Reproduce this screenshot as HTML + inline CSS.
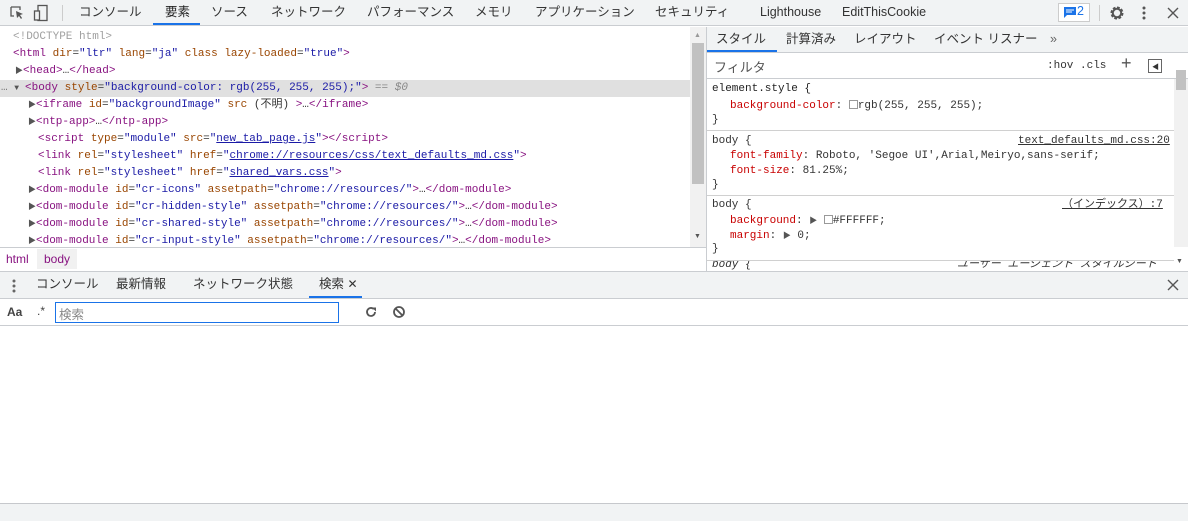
<!DOCTYPE html>
<html><head><meta charset="utf-8"><style>
*{margin:0;padding:0;box-sizing:border-box}
body{width:1188px;height:521px;overflow:hidden;background:#fff;font-family:"Liberation Sans","Noto Sans CJK JP",sans-serif;font-size:12px;color:#333;position:relative}
.a{position:absolute}
.tb{left:0;top:0;width:1188px;height:26px;background:#f1f3f4;border-bottom:1px solid #cacdd1}
.tab{position:absolute;top:0;height:26px;line-height:25px;font-size:12.5px;color:#333;white-space:nowrap}
.code{font-family:"Liberation Mono","Noto Sans CJK JP",monospace;font-size:11px;white-space:pre;line-height:17px}
.tg{color:#881280}.an{color:#994500}.av{color:#1a1aa6}.br{color:#a0a0a0}.lk{color:#1a1aa6;text-decoration:underline}
.ln{position:absolute;height:17px}
.tri{color:#555;font-size:8px}
.pr{color:#c80000}
.rule{position:absolute;left:707px;width:467px;border-bottom:1px solid #d0d0d0}
</style></head><body>
<div class="a tb"></div>
<svg class="a" style="left:9px;top:5px" width="16" height="16" viewBox="0 0 16 16"><path d="M2 2h9v3M2 2v9h3" fill="none" stroke="#555" stroke-width="1.3"/><path d="M7 6l7 3-3 1 2 3-1 1-2-3-2 2z" fill="#555"/></svg>
<svg class="a" style="left:33px;top:4px" width="16" height="18" viewBox="0 0 16 18"><rect x="5" y="1.5" width="9" height="15" fill="none" stroke="#555" stroke-width="1.3"/><rect x="1.5" y="7" width="5" height="9" fill="#f1f3f4" stroke="#555" stroke-width="1.3"/></svg>
<div class="a" style="left:62px;top:5px;width:1px;height:16px;background:#ccc"></div>
<div class="tab" style="left:79px">コンソール</div>
<div class="tab" style="left:165px;color:#222">要素</div>
<div class="a" style="left:153px;top:23px;width:47px;height:2px;background:#1a73e8"></div>
<div class="tab" style="left:211px">ソース</div>
<div class="tab" style="left:271px">ネットワーク</div>
<div class="tab" style="left:367px">パフォーマンス</div>
<div class="tab" style="left:475px">メモリ</div>
<div class="tab" style="left:535px">アプリケーション</div>
<div class="tab" style="left:655px">セキュリティ</div>
<div class="tab" style="left:760px">Lighthouse</div>
<div class="tab" style="left:842px">EditThisCookie</div>
<div class="a" style="left:1058px;top:3px;width:32px;height:19px;border:1px solid #ccc;background:#fff"></div>
<svg class="a" style="left:1064px;top:7px" width="12" height="11" viewBox="0 0 12 11"><path d="M0 0h12v8H3l-3 3z" fill="#1a73e8"/><path d="M2 3h8M2 5h6" stroke="#fff"/></svg>
<div class="a" style="left:1077px;top:4px;font-size:12.5px;color:#1a73e8">2</div>
<div class="a" style="left:1099px;top:5px;width:1px;height:16px;background:#ccc"></div>
<svg class="a" style="left:1109px;top:5px" width="16" height="16" viewBox="0 0 16 16"><circle cx="8" cy="8" r="5" fill="none" stroke="#555" stroke-width="3" stroke-dasharray="2.5 1.4"/><circle cx="8" cy="8" r="4.2" fill="none" stroke="#555" stroke-width="2"/></svg>
<svg class="a" style="left:1142px;top:5px" width="4" height="16"><circle cx="2" cy="3" r="1.5" fill="#555"/><circle cx="2" cy="8" r="1.5" fill="#555"/><circle cx="2" cy="13" r="1.5" fill="#555"/></svg>
<svg class="a" style="left:1167px;top:7px" width="12" height="12"><path d="M1 1l10 10M11 1L1 11" stroke="#555" stroke-width="1.4"/></svg>

<div class="a" style="left:0;top:80px;width:690px;height:17px;background:#e0e0e0"></div>
<div class="a code" style="left:0;top:29px;width:690px">
<div class="ln" style="top:0;left:13px;color:#a0a0a0">&lt;!DOCTYPE html&gt;</div>
<div class="ln" style="top:17px;left:13px"><span class="tg">&lt;html</span> <span class="an">dir</span>=<span class="av">"ltr"</span> <span class="an">lang</span>=<span class="av">"ja"</span> <span class="an">class</span> <span class="an">lazy-loaded</span>=<span class="av">"true"</span><span class="tg">&gt;</span></div>
<div class="ln" style="top:34px;left:15px"><span class="tri">▶</span><span class="tg">&lt;head&gt;</span>…<span class="tg">&lt;/head&gt;</span></div>
<div class="ln" style="top:51px;left:1px;color:#777">… <span class="tri">▼</span></div>
<div class="ln" style="top:51px;left:25px"><span class="tg">&lt;body</span> <span class="an">style</span>=<span class="av">"background-color: rgb(255, 255, 255);"</span><span class="tg">&gt;</span> <span style="color:#888;font-style:italic">== $0</span></div>
<div class="ln" style="top:68px;left:28px"><span class="tri">▶</span><span class="tg">&lt;iframe</span> <span class="an">id</span>=<span class="av">"backgroundImage"</span> <span class="an">src</span> (不明) <span class="tg">&gt;</span>…<span class="tg">&lt;/iframe&gt;</span></div>
<div class="ln" style="top:85px;left:28px"><span class="tri">▶</span><span class="tg">&lt;ntp-app&gt;</span>…<span class="tg">&lt;/ntp-app&gt;</span></div>
<div class="ln" style="top:102px;left:38px"><span class="tg">&lt;script</span> <span class="an">type</span>=<span class="av">"module"</span> <span class="an">src</span>=<span class="av">"<span class="lk">new_tab_page.js</span>"</span><span class="tg">&gt;&lt;/script&gt;</span></div>
<div class="ln" style="top:119px;left:38px"><span class="tg">&lt;link</span> <span class="an">rel</span>=<span class="av">"stylesheet"</span> <span class="an">href</span>=<span class="av">"<span class="lk">chrome://resources/css/text_defaults_md.css</span>"</span><span class="tg">&gt;</span></div>
<div class="ln" style="top:136px;left:38px"><span class="tg">&lt;link</span> <span class="an">rel</span>=<span class="av">"stylesheet"</span> <span class="an">href</span>=<span class="av">"<span class="lk">shared_vars.css</span>"</span><span class="tg">&gt;</span></div>
<div class="ln" style="top:153px;left:28px"><span class="tri">▶</span><span class="tg">&lt;dom-module</span> <span class="an">id</span>=<span class="av">"cr-icons"</span> <span class="an">assetpath</span>=<span class="av">"chrome://resources/"</span><span class="tg">&gt;</span>…<span class="tg">&lt;/dom-module&gt;</span></div>
<div class="ln" style="top:170px;left:28px"><span class="tri">▶</span><span class="tg">&lt;dom-module</span> <span class="an">id</span>=<span class="av">"cr-hidden-style"</span> <span class="an">assetpath</span>=<span class="av">"chrome://resources/"</span><span class="tg">&gt;</span>…<span class="tg">&lt;/dom-module&gt;</span></div>
<div class="ln" style="top:187px;left:28px"><span class="tri">▶</span><span class="tg">&lt;dom-module</span> <span class="an">id</span>=<span class="av">"cr-shared-style"</span> <span class="an">assetpath</span>=<span class="av">"chrome://resources/"</span><span class="tg">&gt;</span>…<span class="tg">&lt;/dom-module&gt;</span></div>
<div class="ln" style="top:204px;left:28px"><span class="tri">▶</span><span class="tg">&lt;dom-module</span> <span class="an">id</span>=<span class="av">"cr-input-style"</span> <span class="an">assetpath</span>=<span class="av">"chrome://resources/"</span><span class="tg">&gt;</span>…<span class="tg">&lt;/dom-module&gt;</span></div>
</div>
<div class="a" style="left:690px;top:27px;width:16px;height:220px;background:#f1f1f1"></div>
<div class="a" style="left:692px;top:43px;width:12px;height:141px;background:#c1c1c1"></div>
<div class="a" style="left:694px;top:32px;font-size:7px;color:#999">▲</div>
<div class="a" style="left:694px;top:233px;font-size:7px;color:#555">▼</div>
<div class="a" style="left:706px;top:27px;width:1px;height:244px;background:#cacdd1"></div>
<div class="a" style="left:0;top:247px;width:706px;height:24px;border-top:1px solid #cacdd1;background:#fff"></div>
<div class="a" style="left:37px;top:249px;width:40px;height:20px;background:#f1f1f1"></div>
<div class="a" style="left:6px;top:252px;color:#881280;font-size:12px">html</div>
<div class="a" style="left:44px;top:252px;color:#881280;font-size:12px">body</div>

<div class="a" style="left:707px;top:27px;width:481px;height:26px;background:#f1f3f4;border-bottom:1px solid #cacdd1"></div>
<div class="tab" style="left:716px;top:27px">スタイル</div>
<div class="a" style="left:707px;top:50px;width:70px;height:2px;background:#1a73e8"></div>
<div class="tab" style="left:786px;top:27px">計算済み</div>
<div class="tab" style="left:854px;top:27px">レイアウト</div>
<div class="tab" style="left:934px;top:27px">イベント リスナー</div>
<div class="tab" style="left:1050px;top:27px;color:#666">»</div>
<div class="a" style="left:707px;top:54px;width:481px;height:25px;border-bottom:1px solid #cacdd1;background:#fff"></div>
<div class="a" style="left:714px;top:57px;font-size:13px;color:#555">フィルタ</div>
<div class="a code" style="left:1047px;top:58px;color:#333">:hov .cls</div>
<div class="a" style="left:1121px;top:53px;font-size:18px;color:#555">+</div>
<div class="a" style="left:1148px;top:59px;width:14px;height:14px;border:1px solid #666"></div>
<div class="a" style="left:1152px;top:62px;font-size:7px;color:#333">◀</div>
<div class="a" style="left:1174px;top:79px;width:14px;height:168px;background:#f1f1f1"></div>
<div class="a" style="left:1176px;top:70px;width:10px;height:20px;background:#c1c1c1"></div>

<div class="a code" style="left:712px;top:81px;color:#222">element.style {</div>
<div class="a code" style="left:730px;top:98px"><span class="pr">background-color</span>: <span style="display:inline-block;width:9px;height:9px;border:1px solid #999;vertical-align:-1px"></span>rgb(255, 255, 255);</div>
<div class="a code" style="left:712px;top:112px">}</div>
<div class="rule" style="top:130px"></div>
<div class="a code" style="left:712px;top:133px">body {</div>
<div class="a code" style="left:1018px;top:133px;text-decoration:underline">text_defaults_md.css:20</div>
<div class="a code" style="left:730px;top:148px"><span class="pr">font-family</span>: Roboto, 'Segoe UI',Arial,Meiryo,sans-serif;</div>
<div class="a code" style="left:730px;top:163px"><span class="pr">font-size</span>: 81.25%;</div>
<div class="a code" style="left:712px;top:177px">}</div>
<div class="rule" style="top:195px"></div>
<div class="a code" style="left:712px;top:197px">body {</div>
<div class="a code" style="left:1062px;top:197px;text-decoration:underline">（インデックス）:7</div>
<div class="a code" style="left:730px;top:213px"><span class="pr">background</span>: <span class="tri">▶</span> <span style="display:inline-block;width:9px;height:9px;border:1px solid #999;vertical-align:-1px"></span>#FFFFFF;</div>
<div class="a code" style="left:730px;top:228px"><span class="pr">margin</span>: <span class="tri">▶</span> 0;</div>
<div class="a code" style="left:712px;top:241px">}</div>
<div class="rule" style="top:260px"></div>
<div class="a" style="left:707px;top:261px;width:467px;height:10px;overflow:hidden"><div class="code" style="position:absolute;left:5px;top:-4px;font-style:italic">body {</div><div class="code" style="position:absolute;left:250px;top:-4px;font-style:italic">ユーザー エージェント スタイルシート</div></div>
<div class="a" style="left:1176px;top:258px;font-size:7px;color:#555">▼</div>

<div class="a" style="left:0;top:271px;width:1188px;height:28px;background:#f1f3f4;border-top:1px solid #cacdd1;border-bottom:1px solid #cacdd1"></div>
<svg class="a" style="left:12px;top:279px" width="4" height="14"><circle cx="2" cy="2" r="1.5" fill="#666"/><circle cx="2" cy="7" r="1.5" fill="#666"/><circle cx="2" cy="12" r="1.5" fill="#666"/></svg>
<div class="tab" style="left:36px;top:272px">コンソール</div>
<div class="tab" style="left:116px;top:272px">最新情報</div>
<div class="tab" style="left:193px;top:272px">ネットワーク状態</div>
<div class="tab" style="left:319px;top:272px">検索 <span style="font-size:12px">✕</span></div>
<div class="a" style="left:309px;top:296px;width:53px;height:2px;background:#1a73e8"></div>
<svg class="a" style="left:1167px;top:279px" width="12" height="12"><path d="M1 1l10 10M11 1L1 11" stroke="#555" stroke-width="1.4"/></svg>
<div class="a" style="left:0;top:299px;width:1188px;height:27px;background:#fff;border-bottom:1px solid #cacdd1"></div>
<div class="a" style="left:7px;top:305px;font-size:12px;font-weight:bold;color:#444">Aa</div>
<div class="a" style="left:37px;top:304px;font-size:12px;color:#444">.*</div>
<div class="a" style="left:55px;top:302px;width:284px;height:21px;border:1px solid #1a73e8"></div>
<div class="a" style="left:59px;top:304px;font-size:12.5px;color:#888">検索</div>
<svg class="a" style="left:364px;top:305px" width="14" height="14" viewBox="0 0 14 14"><path d="M11 7a4 4 0 1 1-1.2-2.9" fill="none" stroke="#555" stroke-width="1.8"/><path d="M8 2.5h4v4z" fill="#555"/></svg>
<svg class="a" style="left:392px;top:305px" width="14" height="14" viewBox="0 0 14 14"><circle cx="7" cy="7" r="5" fill="none" stroke="#555" stroke-width="1.8"/><path d="M3.5 3.5l7 7" stroke="#555" stroke-width="1.8"/></svg>
<div class="a" style="left:0;top:503px;width:1188px;height:18px;background:#f1f3f4;border-top:1px solid #c6c8cc"></div>
</body></html>
